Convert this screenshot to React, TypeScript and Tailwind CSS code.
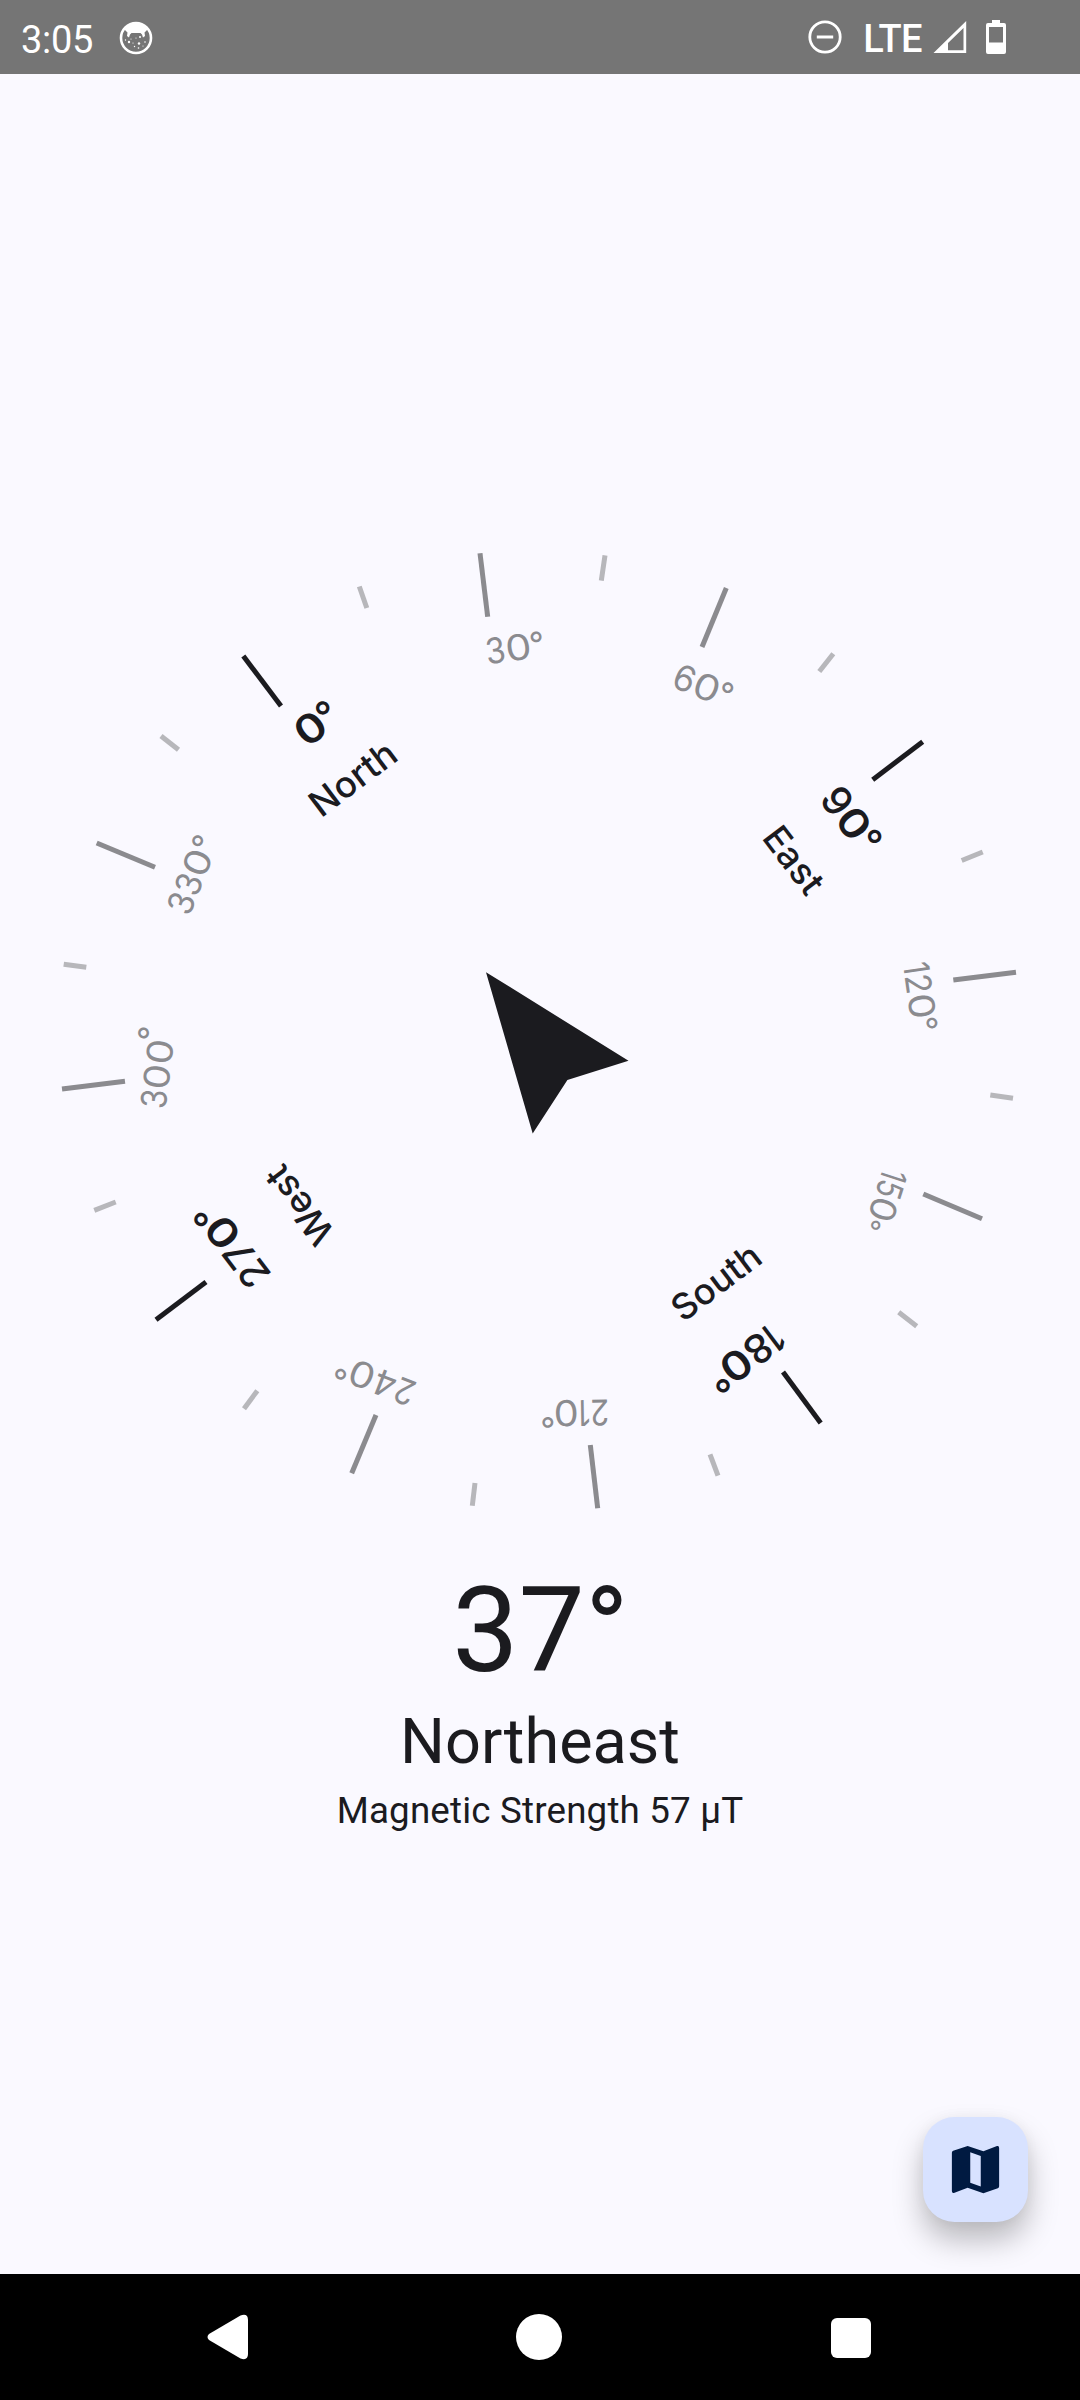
const INK = "#1b1b1f";
const MID = "#8b8b8f";
const FAINT = "#b7b7bb";

type Tick = [number, number, number, number];

const cardinalTicks: Tick[] = [
  [243.3, 656, 281, 706],
  [922.7, 741.7, 872.7, 779.7],
  [783, 1372, 820.7, 1423],
  [156, 1319.7, 206, 1282],
];

const majorTicks: Tick[] = [
  [480, 553.3, 487.7, 616.7],
  [726.3, 588, 702, 647],
  [1016, 972.3, 953.3, 980],
  [923.3, 1194, 982, 1218.7],
  [590.3, 1445, 597.7, 1508.3],
  [351.7, 1473.3, 376, 1415],
  [62, 1089, 125, 1081.3],
  [96.7, 843, 155, 867.3],
];

const minorTicks: Tick[] = [
  [359.3, 586.5, 366.8, 608],
  [605, 555.3, 601.3, 580.7],
  [833.3, 653.7, 819.3, 671.5],
  [982.7, 852, 961.7, 860.5],
  [990.3, 1095, 1013, 1098.3],
  [898.7, 1312.3, 916.7, 1326.3],
  [710, 1454.3, 718, 1475.7],
  [475, 1483, 472.3, 1505.7],
  [257.3, 1390.7, 244, 1408.7],
  [94.3, 1210.3, 115.7, 1202],
  [63.7, 964.3, 86.3, 967.3],
  [161, 736, 178.5, 749.8],
];

interface Degree {
  value: string;
  x: number;
  y: number;
  angle: number;
  width: number;
  ring: [number, number];
  bold?: boolean;
}

const degrees: Degree[] = [
  { value: "0", x: 310.3, y: 728, angle: -37, width: 30, ring: [323, 707], bold: true },
  { value: "30", x: 508.3, y: 648.5, angle: -8, width: 46, ring: [536.7, 636.3] },
  { value: "60", x: 697, y: 683.3, angle: 22, width: 48, ring: [728.7, 687.7] },
  { value: "90", x: 846.3, y: 813, angle: 53.5, width: 56, ring: [875.7, 836.7], bold: true },
  { value: "120", x: 919.7, y: 990.5, angle: 82, width: 57, ring: [932.3, 1023.7] },
  { value: "150", x: 887.7, y: 1195.7, angle: 108, width: 53, ring: [875.7, 1226] },
  { value: "180", x: 752, y: 1353.7, angle: 143, width: 69, ring: [722.7, 1386.7], bold: true },
  { value: "210", x: 581.5, y: 1413, angle: 179, width: 56, ring: [547, 1422.7] },
  { value: "240", x: 382, y: 1382.7, angle: 201.5, width: 69, ring: [339.7, 1374.3] },
  { value: "270", x: 237, y: 1251.7, angle: 233, width: 79, ring: [200, 1219.3], bold: true },
  { value: "300", x: 157, y: 1073.7, angle: -83, width: 70, ring: [143.3, 1032.3] },
  { value: "330", x: 189.7, y: 881.3, angle: -68, width: 67, ring: [197.7, 840] },
];

const words = [
  { label: "North", x: 321, y: 818.5, angle: -37, width: 99 },
  { label: "East", x: 761, y: 838, angle: 52.7, width: 75 },
  { label: "South", x: 683, y: 1323, angle: -37, width: 102 },
  { label: "West", x: 336.5, y: 1233, angle: 233, width: 89 },
];

// Relative advances of the dial's numerals: wide zeros, narrow ones.
const digitShare: Record<string, number> = {
  "0": 26, "1": 12, "2": 20, "3": 20, "4": 23, "5": 19, "6": 21, "7": 20, "8": 22, "9": 22,
};

function Ticks({ ticks, color }: { ticks: Tick[]; color: string }) {
  return (
    <g stroke={color} strokeWidth={5}>
      {ticks.map(([x1, y1, x2, y2]) => (
        <line key={`${x1}-${y1}`} x1={x1} y1={y1} x2={x2} y2={y2} />
      ))}
    </g>
  );
}

function DegreeLabel({ value, x, y, angle, width, ring, bold }: Degree) {
  const size = bold ? 40 : 35.5;
  const ringSize = bold ? 40 : value === "150" ? 28 : 33;
  const rad = (angle * Math.PI) / 180;
  const dx = ring[0] - x;
  const dy = ring[1] - y;
  const rx = dx * Math.cos(rad) + dy * Math.sin(rad);
  const ry = -dx * Math.sin(rad) + dy * Math.cos(rad);
  const digits = value.split("");
  const total = digits.reduce((sum, d) => sum + digitShare[d], 0);
  let cursor = -width / 2;
  return (
    <text
      transform={`translate(${x} ${y}) rotate(${angle})`}
      fontSize={size}
      fontWeight={bold ? 500 : 400}
      fill={bold ? INK : MID}
    >
      {digits.map((d, i) => {
        const w = (digitShare[d] / total) * width;
        const left = cursor;
        cursor += w;
        return (
          <tspan
            key={i}
            x={left}
            y={size * 0.364}
            textLength={w}
            lengthAdjust="spacingAndGlyphs"
            fontWeight={bold && d === "0" ? 600 : undefined}
          >
            {d}
          </tspan>
        );
      })}
      <tspan x={rx - ringSize * 0.25} y={ry + ringSize * 0.58} fontSize={ringSize}>
        °
      </tspan>
    </text>
  );
}

function Compass() {
  return (
    <svg viewBox="0 74 1080 1488" className="h-[1488px] w-full shrink-0 font-['Inter',sans-serif]">
      <Ticks ticks={minorTicks} color={FAINT} />
      <Ticks ticks={majorTicks} color={MID} />
      <Ticks ticks={cardinalTicks} color={INK} />
      {degrees.map((d) => (
        <DegreeLabel key={d.value} {...d} />
      ))}
      {words.map((w) => (
        <text
          key={w.label}
          transform={`translate(${w.x} ${w.y}) rotate(${w.angle})`}
          fontSize={36}
          fontWeight={500}
          fill={INK}
          textLength={w.width}
          lengthAdjust="spacingAndGlyphs"
        >
          {w.label}
        </text>
      ))}
      <path d="M486 972.2 628.5 1060.7 567.4 1080 532.7 1133.5Z" fill={INK} />
    </svg>
  );
}

function StatusBar() {
  return (
    <header className="flex h-[74px] shrink-0 items-center bg-[#757575] pl-[21px] pr-[74px] text-white">
      <span className="mt-[5px] text-[38px] leading-[74px] tracking-[-0.3px]">3:05</span>
      <svg viewBox="0 0 34 34" className="ml-[26px] mt-[2px] size-[34px]">
        <circle cx="17" cy="17" r="15" fill="none" stroke="#fff" strokeWidth="2.6" />
        <path d="M5 8Q10 2 17 2T29 8L25.500 11.500 26 15 24 16.500 23 13.500 21.500 12H12.500L11 13.500 10 16.500 8 15 8.500 11.500Z" fill="#fff" />
        <g fill="#fff">
          <circle cx="10" cy="21" r="1.200" />
          <circle cx="20" cy="22.500" r="1.200" />
          <circle cx="21" cy="16" r="1" />
          <circle cx="14" cy="22" r=".6" />
          <circle cx="17" cy="17" r=".6" />
          <circle cx="26" cy="21" r=".8" />
          <circle cx="6.500" cy="19" r=".7" />
          <circle cx="15.500" cy="25.500" r=".7" />
          <circle cx="19.500" cy="27" r=".8" />
          <circle cx="24" cy="25" r=".6" />
          <circle cx="12" cy="18" r=".6" />
        </g>
      </svg>
      <div className="grow" />
      <svg viewBox="0 0 34 34" className="size-[34px]">
        <circle cx="17" cy="17" r="15.2" fill="none" stroke="#fff" strokeWidth="2.8" />
        <path d="M8.800 17H25.200" stroke="#fff" strokeWidth="3" />
      </svg>
      <span className="ml-[21px] mt-[3px] text-[38px] font-medium leading-[74px] tracking-[-0.6px]">LTE</span>
      <svg viewBox="0 0 34 34" className="ml-[11px] size-[34px]">
        <path fillRule="evenodd" d="M33.200 1V33H.5ZM30.500 8V30.200H15V23Z" fill="#fff" />
      </svg>
      <svg viewBox="0 0 20 34" className="ml-[19px] h-[34px] w-[20px]">
        <path fillRule="evenodd" d="M6 0H14V3H18Q20 3 20 5V32Q20 34 18 34H2Q0 34 0 32V5Q0 3 2 3H6ZM3 7V22.500H17V7Z" fill="#fff" />
      </svg>
    </header>
  );
}

function NavBar() {
  return (
    <nav className="flex h-[126px] shrink-0 items-center bg-black text-white">
      <svg viewBox="0 0 42 46" className="ml-[206.5px] h-[46px] w-[42px]">
        <path d="M2 20 33.500 1.500Q41 -1 41 6V40Q41 47 33.500 44.500L2 26Q-1 23 2 20Z" fill="#fff" />
      </svg>
      <div className="mb-[1px] ml-[267.5px] size-[46px] rounded-full bg-white" />
      <div className="mt-[1px] ml-[269px] size-[40px] rounded-[6px] bg-white" />
    </nav>
  );
}

export default function App() {
  return (
    <div className="relative flex h-[2400px] w-[1080px] flex-col overflow-hidden bg-[#faf9ff] font-['Roboto',sans-serif] text-[#1b1b1f]">
      <StatusBar />
      <main className="flex min-h-0 grow flex-col items-center">
        <Compass />
        <p className="mt-[1px] h-[137px] pl-[1px] text-[118px] leading-[137px]">37°</p>
        <p className="h-[84px] text-[63px] leading-[84px]">Northeast</p>
        <p className="mt-[1px] h-[52px] text-[36.75px] leading-[52px] tracking-[0.17px]">Magnetic Strength 57 µT</p>
      </main>
      <button
        aria-label="Map"
        className="absolute bottom-[178px] right-[52px] flex size-[105px] items-center justify-center rounded-[31.5px] bg-[#d8e2ff] shadow-[0_18px_30px_rgba(0,0,0,0.26),0_0_14px_rgba(0,0,0,0.04)]"
      >
        <svg viewBox="0 0 24 24" className="size-[63px]">
          <path
            fillRule="evenodd"
            d="M20.200 3.050 15 5.050 9 3 3.500 4.850Q3 5.050 3 5.600V20.200Q3 21.200 4 20.900L9 18.950 15 21 20.500 19.150Q21 18.950 21 18.400V3.800Q21 2.800 20.200 3.050ZM10 5.400V17L14 18.500V6.850Z"
            fill="#001a41"
          />
        </svg>
      </button>
      <NavBar />
    </div>
  );
}
